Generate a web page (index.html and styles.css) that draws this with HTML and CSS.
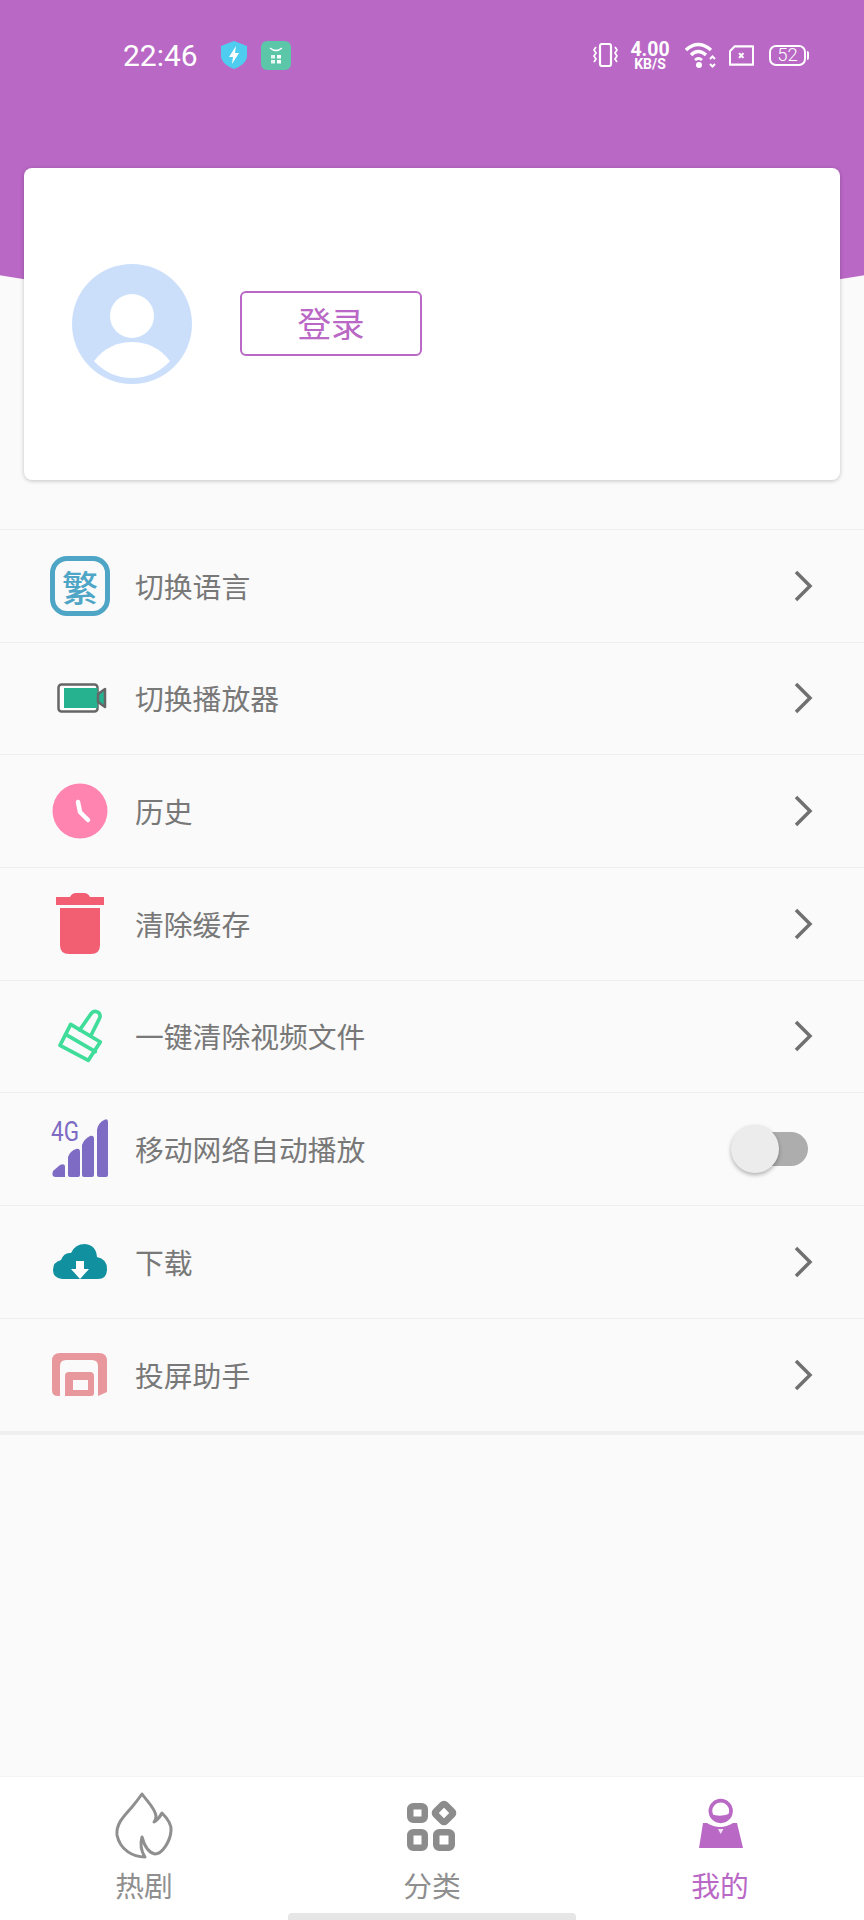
FILE: index.html
```html
<!DOCTYPE html>
<html lang="zh">
<head>
<meta charset="utf-8">
<title>我的</title>
<link rel="stylesheet" href="styles.css">
</head>
<body>
<div class="app">
  <header class="hero">
    <div class="status">
      <span class="time">22:46</span>
      <svg class="st-shield" width="26" height="28" viewBox="0 0 26 28"><path d="M13 0L26 5V15C26 21 19 26 13 28C7 26 0 21 0 15V5Z" fill="#4fcdf0"/><path d="M15 5L8 16H12L11 23L18 12H14Z" fill="#fff"/></svg>
      <svg class="st-app" width="30" height="29" viewBox="0 0 30 29"><rect width="30" height="29" rx="6" fill="#5cc7a8"/><path d="M9 7Q15 12 21 7" fill="none" stroke="#fff" stroke-width="1.6"/><rect x="10" y="14" width="4" height="3.5" fill="#e6f7f1"/><rect x="16" y="14" width="4" height="3.5" fill="#fff"/><rect x="10" y="19" width="4" height="3.5" fill="#e6f7f1"/><rect x="16" y="19" width="4" height="3.5" fill="#fff"/></svg>
      <span class="st-space"></span>
      <svg class="st-vib" width="25" height="24" viewBox="0 0 25 24" fill="none" stroke="#fff"><rect x="7" y="1" width="11" height="22" rx="2" stroke-width="2.200"/><path d="M3 4L1 7L3 10L1 13L3 16L1 19M22 4L24 7L22 10L24 13L22 16L24 19" stroke-width="1.700"/></svg>
      <span class="speed"><b>4.00</b><i>KB/S</i></span>
      <svg class="st-wifi" width="32" height="28" viewBox="0 0 32 28" fill="none" stroke="#fff" stroke-width="3.400"><path d="M1 9Q13 -2 26 9"/><path d="M6 14Q13 7 21 14"/><path d="M10 19Q13.500 16 17 19" stroke-width="2.800"/><circle cx="14" cy="24" r="3" fill="#fff" stroke="none"/><path d="M25 18L27.500 15.500L30 18M25 23L27.500 25.500L30 23" stroke-width="2"/></svg>
      <svg class="st-sim" width="25" height="21" viewBox="0 0 26 21" fill="none"><path d="M6 1H25V20H1V6Z" stroke="#fff" stroke-width="2.200" stroke-linejoin="round"/><path d="M10.500 8L15 13M15 8L10.500 13" stroke="#fff" stroke-width="2.200"/></svg>
      <span class="battery"><span class="batt-num">52</span></span>
    </div>
    <section class="card">
      <svg class="avatar" width="120" height="120" viewBox="0 0 120 120"><circle cx="60" cy="60" r="60" fill="#cbdffb"/><circle cx="60" cy="52" r="22" fill="#fff"/><path d="M22 97C32 84 45 78 60 78C75 78 88 84 98 97C88 108 75 114 60 114C45 114 32 108 22 97Z" fill="#fff"/></svg>
      <div class="login">登录</div>
    </section>
  </header>

  <main class="menu">
    <div class="row">
      <span class="ico"><span class="fan">繁</span></span>
      <span class="label">切换语言</span>
      <svg class="chev" width="20" height="34" viewBox="0 0 20 34"><path d="M3 3L17 17L3 31" fill="none" stroke="#707070" stroke-width="3.500"/></svg>
    </div>
    <div class="row">
      <span class="ico"><svg class="cam" width="50" height="30" viewBox="0 0 50 30"><rect x="1.500" y="1.500" width="39" height="27" rx="3" fill="#fff" stroke="#666" stroke-width="2.500"/><rect x="7" y="5" width="33.500" height="20" fill="#26b28f"/><path d="M41 11L48 6V24L41 19Z" fill="#26b28f" stroke="#666" stroke-width="2.500" stroke-linejoin="round"/></svg></span>
      <span class="label">切换播放器</span>
      <svg class="chev" width="20" height="34" viewBox="0 0 20 34"><path d="M3 3L17 17L3 31" fill="none" stroke="#707070" stroke-width="3.500"/></svg>
    </div>
    <div class="row">
      <span class="ico"><svg width="56" height="56" viewBox="0 0 56 56"><circle cx="28" cy="28" r="27.500" fill="#ff85b0"/><path d="M26 19L28 29L36 37" fill="none" stroke="#fff" stroke-width="4.500" stroke-linecap="round" stroke-linejoin="round"/></svg></span>
      <span class="label">历史</span>
      <svg class="chev" width="20" height="34" viewBox="0 0 20 34"><path d="M3 3L17 17L3 31" fill="none" stroke="#707070" stroke-width="3.500"/></svg>
    </div>
    <div class="row">
      <span class="ico"><svg width="48" height="61" viewBox="0 0 48 61"><path d="M0 4H14Q16 0 20 0H28Q32 0 34 4H48V12H0Z" fill="#f25f73"/><path d="M4 15H44V52Q44 61 35 61H13Q4 61 4 52Z" fill="#f25f73"/></svg></span>
      <span class="label">清除缓存</span>
      <svg class="chev" width="20" height="34" viewBox="0 0 20 34"><path d="M3 3L17 17L3 31" fill="none" stroke="#707070" stroke-width="3.500"/></svg>
    </div>
    <div class="row">
      <span class="ico"><svg width="44" height="54" viewBox="85 450 132 160" fill="none" stroke="#3fdc9a" stroke-width="11" stroke-linejoin="round" stroke-linecap="round"><path d="M123 495L91 558L176 603L212 548Z"/><path d="M108 525L197 577"/><path d="M150 512L185 462Q195 452 207 460Q215 468 208 480L183 530"/></svg></span>
      <span class="label">一键清除视频文件</span>
      <svg class="chev" width="20" height="34" viewBox="0 0 20 34"><path d="M3 3L17 17L3 31" fill="none" stroke="#707070" stroke-width="3.500"/></svg>
    </div>
    <div class="row">
      <span class="ico"><svg width="60" height="72" viewBox="0 -6 60 72"><text class="fourg" x="1" y="22" textLength="28" lengthAdjust="spacingAndGlyphs">4G</text><path d="M3 52L10 46Q15 44 15 48V58H6Q1 58 3 52Z" fill="#7e6bc4"/><path d="M18 38Q20 32 26 30Q30 29 30 33V56Q30 58 28 58H20Q18 58 18 56Z" fill="#7e6bc4"/><path d="M32 26Q34 20 40 17Q44 16 44 20V56Q44 58 42 58H34Q32 58 32 56Z" fill="#7e6bc4"/><path d="M47 11Q48 4 54 1Q58 -1 58 3V56Q58 58 56 58H49Q47 58 47 56Z" fill="#7e6bc4"/></svg></span>
      <span class="label">移动网络自动播放</span>
      <span class="switch"><span class="thumb"></span></span>
    </div>
    <div class="row">
      <span class="ico"><svg width="54" height="36" viewBox="0 0 54 36"><path d="M9 35Q0 34 0 26Q0 18 8 16Q11 8 18 9Q22 0 32 0Q43 1 44 13Q54 15 54 25Q54 35 45 35Z" fill="#11919f"/><path d="M23 17H31V25H36L27 35L18 25H23Z" fill="#fff"/></svg></span>
      <span class="label">下载</span>
      <svg class="chev" width="20" height="34" viewBox="0 0 20 34"><path d="M3 3L17 17L3 31" fill="none" stroke="#707070" stroke-width="3.500"/></svg>
    </div>
    <div class="row">
      <span class="ico"><svg width="56" height="44" viewBox="0 0 56 44"><path d="M8 0H47Q55 0 55 8V39L46 43V13Q46 7 40 7H14Q8 7 8 13V43H6Q0 43 0 37V8Q0 0 8 0Z" fill="#e8979c"/><path d="M13 23Q13 19 17 19H38Q42 19 42 23V40Q42 43 39 43H13ZM21 27V37H36V27Z" fill="#e8979c" fill-rule="evenodd"/></svg></span>
      <span class="label">投屏助手</span>
      <svg class="chev" width="20" height="34" viewBox="0 0 20 34"><path d="M3 3L17 17L3 31" fill="none" stroke="#707070" stroke-width="3.500"/></svg>
    </div>
  </main>

  <footer class="tabs">
    <nav class="tab-row">
      <div class="tab">
        <svg class="tab-ico" width="70" height="70" viewBox="0 0 70 70"><path d="M33 4C38 11 46 18 47 26Q47 30 45 32Q50 29 53 23C58 28 63 34 62 41C61 52 53 64 46 64Q37 62 33 47Q30 58 36 67C24 67 11 60 8 45C7 34 14 27 23 17Q28 11 33 4Z" fill="none" stroke="#8f8f8f" stroke-width="3" stroke-linejoin="round"/></svg>
        <span class="tab-text">热剧</span>
      </div>
      <div class="tab">
        <svg class="tab-ico" width="70" height="70" viewBox="0 0 70 70"><g fill="none" stroke="#8c8c8c" stroke-width="6.500"><rect x="13.250" y="16.250" width="14.500" height="13.500" rx="3"/><rect x="13.250" y="42.250" width="14.500" height="15.500" rx="3"/><rect x="39.250" y="42.250" width="15.500" height="15.500" rx="3"/><rect x="40" y="16" width="14" height="14" rx="2" transform="rotate(45 47 23)"/></g></svg>
        <span class="tab-text">分类</span>
      </div>
      <div class="tab tab-on">
        <svg class="tab-ico" width="70" height="70" viewBox="0 0 70 70"><circle cx="35.700" cy="21" r="10.300" fill="none" stroke="#b968c5" stroke-width="3.700"/><path d="M26 24Q36 28 46 23Q43 32 36 32Q29 32 26 24Z" fill="#b968c5"/><path d="M18 33H22Q35 41 48 33H52L58 58H14Z" fill="#b968c5"/><path d="M33 39H38.500L35.700 44Z" fill="#f3e2f6"/></svg>
        <span class="tab-text">我的</span>
      </div>
    </nav>
    <div class="home-bar"></div>
  </footer>
</div>
</body>
</html>
```

FILE: styles.css
```css
* { box-sizing: border-box; }
html, body { margin: 0; padding: 0; }
body {
  width: 864px;
  height: 1920px;
  background: #fafafa;
  font-family: "Noto Sans CJK SC", "Noto Sans", sans-serif;
  overflow: hidden;
}
.app {
  display: flex;
  flex-direction: column;
  height: 1920px;
}

/* header */
.hero {
  height: 480px;
  background: radial-gradient(circle 2630px at 432px -2319px, #b968c5 2629.5px, transparent 2630.5px);
}
.status {
  display: flex;
  align-items: center;
  height: 110px;
  padding: 0 58px 0 123px;
  color: #fff;
}
.time {
  font-family: Roboto, sans-serif;
  font-size: 30px;
  font-weight: 400;
  width: 98px;
}
.st-app { margin-left: 14px; }
.st-space { flex: 1; }
.st-vib { margin-right: 12px; }
.speed {
  display: flex;
  flex-direction: column;
  align-items: center;
  width: 40px;
  margin-right: 15px;
  font-family: Roboto, sans-serif;
}
.speed b { font-size: 19.500px; line-height: 17px; font-weight: 700; }
.speed i { font-size: 14px; line-height: 12px; font-weight: 700; font-style: normal; }
.st-sim { margin: 0 15px 0 12px; }
.battery {
  display: flex;
  align-items: center;
  justify-content: center;
  position: relative;
  width: 37px;
  height: 21px;
  border: 2px solid #fff;
  border-radius: 7px;
}
.battery::after {
  content: "";
  position: absolute;
  right: -5px;
  top: 4px;
  width: 2px;
  height: 9px;
  background: #fff;
  border-radius: 0 2px 2px 0;
}
.batt-num {
  font-family: Roboto, sans-serif;
  font-size: 18.500px;
  line-height: 17px;
  font-weight: 300;
}

/* card */
.card {
  display: flex;
  align-items: center;
  gap: 48px;
  height: 312px;
  margin: 58px 24px 0;
  padding: 0 48px;
  background: #fff;
  border-radius: 8px;
  box-shadow: 0 1px 4px rgba(0, 0, 0, 0.22);
}
.login {
  display: flex;
  align-items: center;
  justify-content: center;
  width: 182px;
  height: 65px;
  margin-bottom: 2px;
  border: 2.500px solid #b968c5;
  border-radius: 6px;
  color: #b968c5;
  font-size: 33.600px;
  line-height: 1;
}

/* list */
.menu {
  flex: 1;
  margin-top: 49px;
}
.row {
  display: flex;
  align-items: center;
  height: 112.660px;
  border-top: 1px solid #efefef;
  padding: 0 50px 0 48px;
}
.row:last-child {
  height: 117px;
  border-bottom: 4px solid #efefef;
}
.ico {
  display: flex;
  align-items: center;
  justify-content: center;
  flex: none;
  width: 64px;
  height: 64px;
  margin-right: 23px;
}
.cam { margin-left: 3px; }
.fan {
  display: flex;
  align-items: center;
  justify-content: center;
  width: 60px;
  height: 60px;
  border: 5px solid #4ea5c5;
  border-radius: 17px;
  color: #4ea5c5;
  font-size: 36px;
  line-height: 1;
  font-weight: 500;
}
.label {
  flex: 1;
  color: #787878;
  font-size: 28.800px;
  line-height: 40px;
}
.chev { flex: none; margin-right: 1px; }
.fourg {
  font-family: Roboto, sans-serif;
  font-size: 27px;
  font-weight: 400;
  fill: #7e6bc4;
}

/* switch */
.switch {
  display: flex;
  align-items: center;
  flex: none;
  width: 70px;
  height: 34px;
  margin-right: 6px;
  background: #adadad;
  border-radius: 17px;
}
.thumb {
  width: 48px;
  height: 48px;
  margin-left: -7px;
  background: #ececec;
  border-radius: 50%;
  box-shadow: 0 2px 4px rgba(0, 0, 0, 0.3);
}

/* tabs */
.tabs {
  display: flex;
  flex-direction: column;
  align-items: center;
  height: 144px;
  background: #fff;
  border-top: 1px solid #f4f4f4;
}
.tab-row {
  display: grid;
  grid-template-columns: repeat(3, 1fr);
  width: 100%;
  height: 136px;
  padding-top: 13px;
}
.tab {
  display: flex;
  flex-direction: column;
  align-items: center;
  color: #8f8f8f;
}
.tab-on { color: #b968c5; }
.tab-ico { display: block; margin-bottom: 11px; }
.tab-text { font-size: 28.800px; line-height: 28px; }
.home-bar {
  width: 288px;
  height: 7px;
  background: #e6e6e6;
  border-radius: 4px 4px 0 0;
}
```
